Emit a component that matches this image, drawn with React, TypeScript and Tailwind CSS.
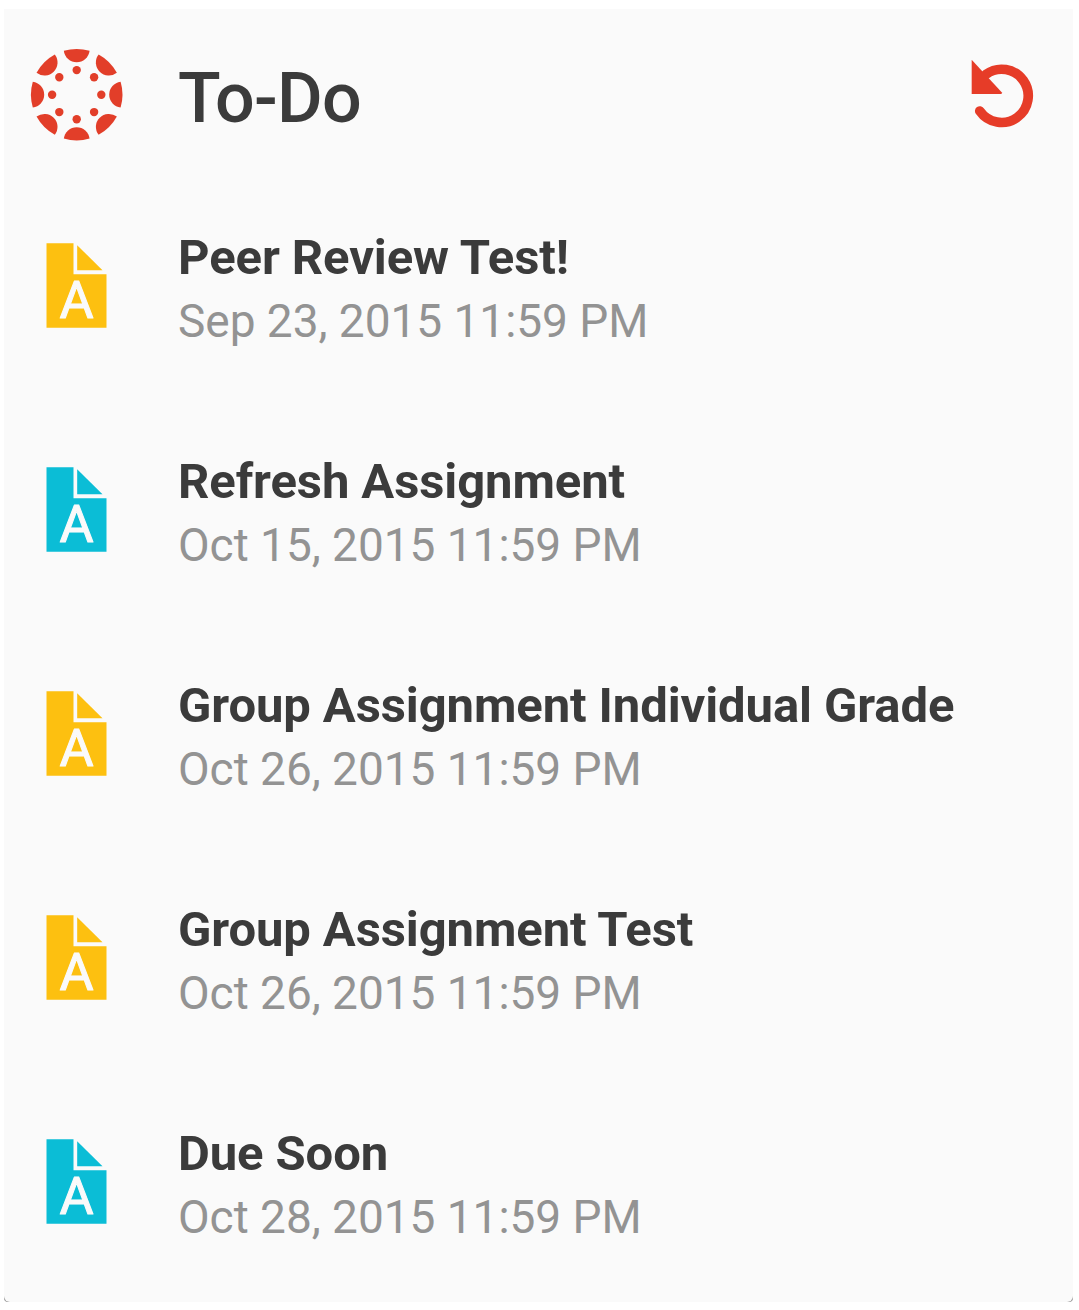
type Todo = { title: string; due: string; color: string };

const todos: Todo[] = [
  { title: "Peer Review Test!", due: "Sep 23, 2015 11:59 PM", color: "text-[#fdc010]" },
  { title: "Refresh Assignment", due: "Oct 15, 2015 11:59 PM", color: "text-[#0bbdd6]" },
  { title: "Group Assignment Individual Grade", due: "Oct 26, 2015 11:59 PM", color: "text-[#fdc010]" },
  { title: "Group Assignment Test", due: "Oct 26, 2015 11:59 PM", color: "text-[#fdc010]" },
  { title: "Due Soon", due: "Oct 28, 2015 11:59 PM", color: "text-[#0bbdd6]" },
];

function Logo() {
  return (
    <svg className="h-[92px] w-[92px] shrink-0" viewBox="-45.700 -45.700 92 92" fill="#e23e29" overflow="visible">
      {[0, 45, 90, 135, 180, 225, 270, 315].map((a) => (
        <g key={a} transform={`rotate(${a})`}>
          <path d="M-12.9 -43.9A45.7 45.7 0 0 1 12.9 -43.9A13 13 0 0 1 -12.9 -43.9Z" />
          <circle cy="-24.6" r="4.2" />
        </g>
      ))}
    </svg>
  );
}

function RefreshIcon() {
  return (
    <svg className="h-[85px] w-[85px]" viewBox="0 0 255 255" fill="#e63c28">
      <path
        d="M59.300 183A79.800 79.800 0 1 0 78 73"
        fill="none"
        stroke="#e63c28"
        strokeWidth="29"
        strokeLinecap="round"
      />
      <path d="M35 29L125 127V132H35Z" />
    </svg>
  );
}

function AssignmentIcon({ color }: { color: string }) {
  return (
    <svg className={`h-[85px] w-[61px] shrink-0 overflow-visible ${color}`} viewBox="33.500 23.500 183 255" fill="currentColor">
      <path d="M35 24H116V117H215V278H35Z" />
      <path d="M127 30L203 105H127Z" />
      <text
        x="125"
        y="250"
        textAnchor="middle"
        fontSize="157"
        fill="#fafafa"
        stroke="#fafafa"
        strokeWidth="3"
        strokeLinejoin="round"
        fontFamily="Roboto, sans-serif"
      >
        A
      </text>
    </svg>
  );
}

export default function App() {
  return (
    <div className="h-[1310px] bg-white pt-[9px] pl-1 font-['Roboto',sans-serif]">
      <div className="h-[1293px] w-[1069px] rounded-b-[4px] bg-linear-to-b from-[#fafafa] from-99% to-[#999999] to-99%">
        <main className="h-[1293px] rounded-[6px] bg-[#fafafa]">
          <header className="flex h-[172px] items-center pr-[28px] pl-[27px]">
            <Logo />
            <h1 className="ml-[55px] flex-1 pt-[5px] text-[70px] leading-[82px] font-medium tracking-[-0.8px] text-[#3b3b3b]">
              To-Do
            </h1>
            <button aria-label="Refresh" className="pb-[6px]">
              <RefreshIcon />
            </button>
          </header>
          <ul>
            {todos.map((t) => (
              <li key={t.title} className="flex h-[224px] items-start pl-[42px]">
                <div className="pt-[62px]">
                  <AssignmentIcon color={t.color} />
                </div>
                <div className="ml-[71px] pt-[45px]">
                  <h2 className="text-[49px] leading-[64px] font-bold tracking-[-0.1px] whitespace-nowrap text-[#3b3b3b]">
                    {t.title}
                  </h2>
                  <p className="-mt-px text-[46px] leading-[64px] tracking-[-0.03px] whitespace-nowrap text-[#939393]">
                    {t.due}
                  </p>
                </div>
              </li>
            ))}
          </ul>
        </main>
      </div>
    </div>
  );
}
